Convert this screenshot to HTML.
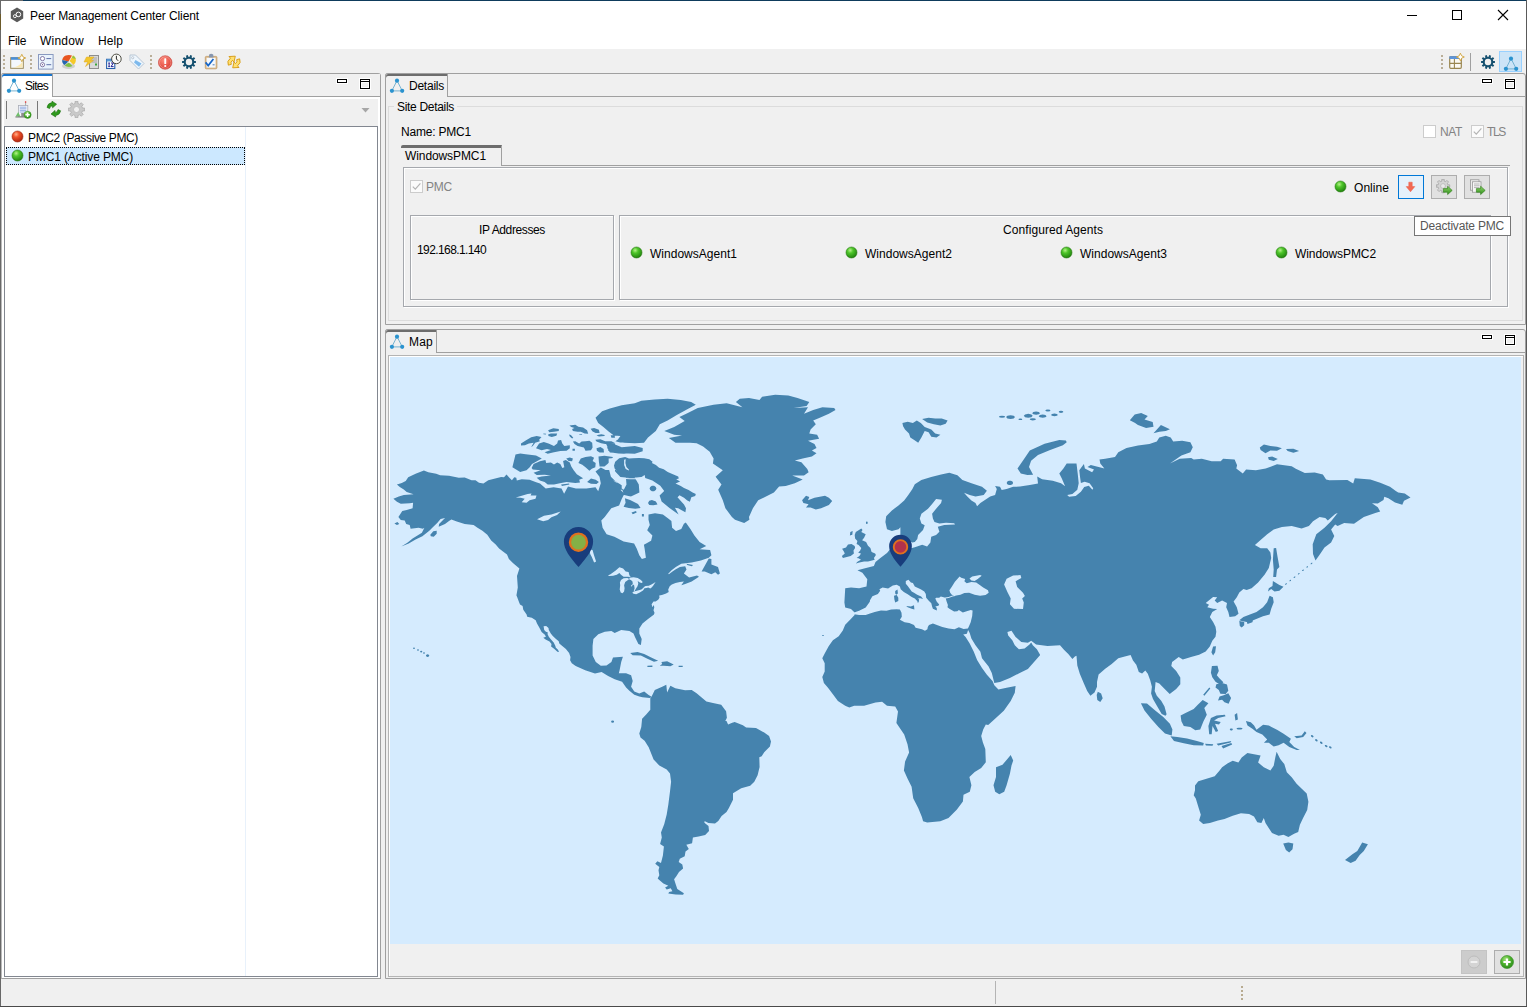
<!DOCTYPE html>
<html><head><meta charset="utf-8"><title>Peer Management Center Client</title>
<style>
html,body{margin:0;padding:0}
body{width:1527px;height:1007px;overflow:hidden;background:#f0f0f0;position:relative;font-family:"Liberation Sans",sans-serif;font-size:12px}
.b{position:absolute;box-sizing:border-box;display:block}
.t{position:absolute;white-space:nowrap;font-family:"Liberation Sans",sans-serif}
</style></head>
<body>
<svg width="0" height="0" style="position:absolute"><defs>
<radialGradient id="gG" cx="0.38" cy="0.3" r="0.75"><stop offset="0" stop-color="#b6f08a"/><stop offset="0.35" stop-color="#4ec62a"/><stop offset="1" stop-color="#1d7d0c"/></radialGradient>
<radialGradient id="gR" cx="0.38" cy="0.3" r="0.75"><stop offset="0" stop-color="#ffb08a"/><stop offset="0.35" stop-color="#f0532a"/><stop offset="1" stop-color="#a8200c"/></radialGradient>
<linearGradient id="gY" x1="0" y1="0" x2="0" y2="1"><stop offset="0" stop-color="#ffe27a"/><stop offset="1" stop-color="#e5a51c"/></linearGradient>
<linearGradient id="gGr" x1="0" y1="0" x2="0" y2="1"><stop offset="0" stop-color="#8fd46a"/><stop offset="1" stop-color="#2f8f1a"/></linearGradient>
<radialGradient id="gRed" cx="0.4" cy="0.35" r="0.7"><stop offset="0" stop-color="#ff8a7a"/><stop offset="1" stop-color="#d8362c"/></radialGradient>
<radialGradient id="gPlus" cx="0.4" cy="0.3" r="0.75"><stop offset="0" stop-color="#a5e37c"/><stop offset="0.5" stop-color="#4bb02c"/><stop offset="1" stop-color="#2a8a18"/></radialGradient>
</defs></svg>
<div class="b" style="left:0px;top:0px;width:1527px;height:49px;background:#fff"></div>
<div class="b" style="left:0px;top:0px;width:1527px;height:1px;background:#0e3b5c"></div>
<div class="b" style="left:0px;top:0px;width:23px;height:1px;background:#6b6b6b"></div>
<div class="b" style="left:0px;top:0px;width:1px;height:1007px;background:#686868"></div>
<div class="b" style="left:0px;top:14px;width:1px;height:16px;background:#6b5a2a"></div>
<div class="b" style="left:1526px;top:0px;width:1px;height:1007px;background:#5a5a5a"></div>
<div class="b" style="left:0px;top:1006px;width:1527px;height:1px;background:#4a4a4a"></div>
<svg class="b" style="left:10px;top:7px;" width="14" height="16" viewBox="0 0 14 16"><path d="M7 0.6 L13.2 4.2 L13.2 11.6 L7 15.2 L0.8 11.6 L0.8 4.2 Z" fill="#595959"/><circle cx="8.4" cy="7.4" r="2.3" fill="none" stroke="#fff" stroke-width="1"/><circle cx="4.9" cy="9.2" r="1.5" fill="none" stroke="#fff" stroke-width="0.9"/></svg>
<div class="t" style="left:30px;top:9px;font-size:12px;line-height:14px;color:#000;letter-spacing:-0.107px;">Peer Management Center Client</div>
<div class="b" style="left:1407px;top:15px;width:10px;height:1px;background:#000"></div>
<div class="b" style="left:1452px;top:10px;width:10px;height:10px;border:1px solid #000"></div>
<svg class="b" style="left:1497px;top:9px;" width="12" height="12" viewBox="0 0 12 12"><path d="M1 1 L11 11 M11 1 L1 11" stroke="#000" stroke-width="1.1" fill="none"/></svg>
<div class="t" style="left:8px;top:34px;font-size:12px;line-height:14px;color:#000;letter-spacing:-0.336px;">File</div>
<div class="t" style="left:40px;top:34px;font-size:12px;line-height:14px;color:#000;letter-spacing:0.219px;">Window</div>
<div class="t" style="left:98px;top:34px;font-size:12px;line-height:14px;color:#000;letter-spacing:0.078px;">Help</div>
<div class="b" style="left:3px;top:55px;width:2px;height:2px;background:#b9ae98"></div>
<div class="b" style="left:3px;top:59px;width:2px;height:2px;background:#b9ae98"></div>
<div class="b" style="left:3px;top:63px;width:2px;height:2px;background:#b9ae98"></div>
<div class="b" style="left:3px;top:67px;width:2px;height:2px;background:#b9ae98"></div>
<div class="b" style="left:30px;top:55px;width:2px;height:2px;background:#b9ae98"></div>
<div class="b" style="left:30px;top:59px;width:2px;height:2px;background:#b9ae98"></div>
<div class="b" style="left:30px;top:63px;width:2px;height:2px;background:#b9ae98"></div>
<div class="b" style="left:30px;top:67px;width:2px;height:2px;background:#b9ae98"></div>
<div class="b" style="left:150px;top:55px;width:2px;height:2px;background:#b9ae98"></div>
<div class="b" style="left:150px;top:59px;width:2px;height:2px;background:#b9ae98"></div>
<div class="b" style="left:150px;top:63px;width:2px;height:2px;background:#b9ae98"></div>
<div class="b" style="left:150px;top:67px;width:2px;height:2px;background:#b9ae98"></div>
<div class="b" style="left:1441px;top:55px;width:2px;height:2px;background:#b9ae98"></div>
<div class="b" style="left:1441px;top:59px;width:2px;height:2px;background:#b9ae98"></div>
<div class="b" style="left:1441px;top:63px;width:2px;height:2px;background:#b9ae98"></div>
<div class="b" style="left:1441px;top:67px;width:2px;height:2px;background:#b9ae98"></div>
<div class="b" style="left:1470px;top:53px;width:1px;height:18px;background:#a0a0a0"></div>
<div class="b" style="left:1499px;top:51px;width:23px;height:21px;background:#cce4f7;border:1px solid #99d1ff"></div>
<svg class="b" style="left:1503.3px;top:55.8px;" width="16" height="16" viewBox="0 0 16 16"><path d="M8 2.6 L2.8 12.9 L13.3 12.9 Z" fill="none" stroke="#6aaccc" stroke-width="0.9"/><circle cx="8" cy="2.7" r="2.1" fill="#2b93cf"/><circle cx="2.9" cy="12.8" r="2.1" fill="#2b93cf"/><circle cx="13.2" cy="12.8" r="2.1" fill="#2b93cf"/></svg>
<svg class="b" style="left:1481px;top:55.3px;" width="14" height="14" viewBox="0 0 14 14"><path d="M13.91 5.90 L13.91 8.10 L12.24 7.91 L11.78 9.34 L13.24 10.18 L11.95 11.95 L10.70 10.82 L9.49 11.70 L10.18 13.24 L8.10 13.91 L7.75 12.27 L6.25 12.27 L5.90 13.91 L3.82 13.24 L4.51 11.70 L3.30 10.82 L2.05 11.95 L0.76 10.18 L2.22 9.34 L1.76 7.91 L0.09 8.10 L0.09 5.90 L1.76 6.09 L2.22 4.66 L0.76 3.82 L2.05 2.05 L3.30 3.18 L4.51 2.30 L3.82 0.76 L5.90 0.09 L6.25 1.73 L7.75 1.73 L8.10 0.09 L10.18 0.76 L9.49 2.30 L10.70 3.18 L11.95 2.05 L13.24 3.82 L11.78 4.66 L12.24 6.09Z" fill="#15506f"/><circle cx="7.0" cy="7.0" r="3.22" fill="#f0f0f0"/></svg>
<svg class="b" style="left:182px;top:55.4px;" width="14" height="14" viewBox="0 0 14 14"><path d="M13.91 5.90 L13.91 8.10 L12.24 7.91 L11.78 9.34 L13.24 10.18 L11.95 11.95 L10.70 10.82 L9.49 11.70 L10.18 13.24 L8.10 13.91 L7.75 12.27 L6.25 12.27 L5.90 13.91 L3.82 13.24 L4.51 11.70 L3.30 10.82 L2.05 11.95 L0.76 10.18 L2.22 9.34 L1.76 7.91 L0.09 8.10 L0.09 5.90 L1.76 6.09 L2.22 4.66 L0.76 3.82 L2.05 2.05 L3.30 3.18 L4.51 2.30 L3.82 0.76 L5.90 0.09 L6.25 1.73 L7.75 1.73 L8.10 0.09 L10.18 0.76 L9.49 2.30 L10.70 3.18 L11.95 2.05 L13.24 3.82 L11.78 4.66 L12.24 6.09Z" fill="#15506f"/><circle cx="7.0" cy="7.0" r="3.22" fill="#f0f0f0"/></svg>
<svg class="b" style="left:10px;top:54px;" width="16" height="16" viewBox="0 0 16 16"><rect x="0.7" y="3.7" width="12.6" height="10.6" fill="#f4f8fd" stroke="#9c8a5a" stroke-width="1"/><rect x="1" y="3.2" width="12" height="2.6" fill="#4a8fd8"/><path d="M2 13.5 Q9 13 12.5 7.5 L12.5 13.5 Z" fill="#fbe9b4"/><path d="M11.8 0.3 L13 2.9 L15.7 4 L13 5.1 L11.8 7.7 L10.6 5.1 L7.9 4 L10.6 2.9 Z" fill="#fff" stroke="#d0a33a" stroke-width="0.9"/></svg>
<svg class="b" style="left:38px;top:54px;" width="16" height="16" viewBox="0 0 16 16"><rect x="0.5" y="0.5" width="14.6" height="14.6" fill="#eaf3fc" stroke="#8a9ac0" stroke-width="1"/><circle cx="4.5" cy="4.6" r="2.1" fill="#fff" stroke="#6a5a90" stroke-width="0.8"/><circle cx="4.5" cy="10.7" r="2.1" fill="#fff" stroke="#6a5a90" stroke-width="0.8"/><circle cx="4.5" cy="10.7" r="0.6" fill="#6a5a90"/><path d="M8.4 4.6 H13.2 M8.4 10.7 H13.2" stroke="#4f5fa0" stroke-width="0.9"/></svg>
<svg class="b" style="left:61px;top:54px;" width="16" height="16" viewBox="0 0 16 16"><ellipse cx="7.5" cy="12" rx="6.5" ry="3" fill="#b9b9b9" opacity="0.6"/><path d="M7.5 7.5 L1.2 6 A6.6 5.6 0 0 1 11 1.6 Z" fill="#e8551f"/><path d="M7.5 7.5 L1.2 6 A6.6 5.6 0 0 0 3.5 11 Z" fill="#2566b0"/><path d="M7.8 8.5 L3.6 11.6 A6.6 5.2 0 0 0 11.5 12 Z" fill="#7fc043"/><path d="M8.6 7 L12 1.4 A6 5.6 0 0 1 14.8 7 A6 5.6 0 0 1 12.6 10.8 Z" fill="#f6c928"/><path d="M12 1.4 A6 5.6 0 0 1 14.8 5 L11 4 Z" fill="#8fc64a"/></svg>
<svg class="b" style="left:83px;top:54px;" width="16" height="16" viewBox="0 0 16 16"><rect x="6.5" y="1.5" width="9" height="13" fill="#d9d9d9" stroke="#8e8e8e" stroke-width="1"/><path d="M8.5 4 H14 M8.5 6 H14 M8.5 8 H14" stroke="#9a9a9a" stroke-width="0.8"/><rect x="12" y="9.5" width="2" height="2" fill="#3aa53a"/><path d="M3.5 3 L11 3 L7.5 6.5 L10.5 6.5 L2.5 12.5 L4.8 8 L1 8 Z" fill="#f2c62e" stroke="#e0a820" stroke-width="0.5"/></svg>
<svg class="b" style="left:106px;top:53px;" width="17" height="17" viewBox="0 0 17 17"><rect x="0.6" y="6.3" width="8.2" height="9.2" fill="#fff" stroke="#2a62ac" stroke-width="1.1"/><rect x="0.6" y="6.3" width="8.2" height="2.2" fill="#5a9ad4"/><path d="M2.3 10 H3.9 M3.1 10 V13.6 M2.3 13.6 H3.9 M5 10 H7.4 L5 13.6 H7.6" stroke="#14148c" stroke-width="0.95" fill="none"/><circle cx="10.4" cy="5.9" r="4.8" fill="#f9f9f5" stroke="#3a3a30" stroke-width="0.9"/><path d="M10.4 2.8 V6 L12.2 7.8" stroke="#111" stroke-width="0.9" fill="none"/></svg>
<svg class="b" style="left:129px;top:54px;" width="16" height="16" viewBox="0 0 16 16"><path d="M1 1 L6.5 1 L15 9.5 L9.5 15 L1 6.5 Z" fill="#eef6fd" stroke="#b8c6d4" stroke-width="1"/><path d="M6.5 6 L12.5 9.5 L10 12.8 L5 8.5 Z" fill="#7db9ec"/><circle cx="3.7" cy="3.7" r="1.1" fill="#fff" stroke="#a5b4c4" stroke-width="0.7"/></svg>
<svg class="b" style="left:158px;top:54.6px;" width="15" height="15" viewBox="0 0 15 15"><circle cx="7.2" cy="7.5" r="6.8" fill="url(#gRed)" stroke="#c8463c" stroke-width="0.6"/><circle cx="7.2" cy="7.5" r="5.7" fill="none" stroke="#fff" stroke-opacity="0.55" stroke-width="0.5"/><rect x="6.3" y="3.2" width="1.9" height="5.8" rx="0.6" fill="#fff"/><circle cx="7.25" cy="11" r="1.1" fill="#fff"/></svg>
<svg class="b" style="left:204px;top:53px;" width="15" height="17" viewBox="0 0 15 17"><rect x="1.3" y="3.4" width="11.6" height="12.4" rx="1" fill="#dcb98a" stroke="#c09a66" stroke-width="0.8"/><rect x="2.6" y="4.8" width="9" height="9.8" fill="#f4f8fd"/><path d="M4.8 4.4 L5.2 1.4 Q7.2 0.2 9.2 1.4 L9.6 4.4 Z" fill="#8796ae"/><path d="M1.6 9.4 L4.2 12.6 L9.4 6" fill="none" stroke="#1565c8" stroke-width="1.7"/><path d="M8.6 11.8 H10.6" stroke="#1d5aa8" stroke-width="0.8"/></svg>
<svg class="b" style="left:226px;top:53.5px;" width="16" height="16" viewBox="0 0 16 16"><g transform="rotate(-38 8 8)"><path d="M1.6 7 Q2.6 2.6 7.6 2.8 L7.4 0.6 L12.6 4.2 L8 8 L7.8 5.8 Q5 5.6 4.4 8.2 Z" fill="#ffe070" stroke="#d4960c" stroke-width="0.8"/><path d="M14.4 9 Q13.4 13.4 8.4 13.2 L8.6 15.4 L3.4 11.8 L8 8 L8.2 10.2 Q11 10.4 11.6 7.8 Z" fill="#ffe070" stroke="#d4960c" stroke-width="0.8"/></g></svg>
<svg class="b" style="left:1448px;top:53px;" width="17" height="17" viewBox="0 0 17 17"><rect x="1.7" y="3.7" width="11.6" height="11.6" rx="1" fill="#fbf9f2" stroke="#9a8650" stroke-width="1.2"/><rect x="1.4" y="3.2" width="12.2" height="2.8" fill="#5b94dc"/><path d="M6.4 6 V15 M1.7 10.4 H13.3" stroke="#9a8650" stroke-width="1.1"/><path d="M12.4 0.2 L13.6 2.8 L16.3 4 L13.6 5.2 L12.4 7.8 L11.2 5.2 L8.5 4 L11.2 2.8 Z" fill="#fff" stroke="#d0a33a" stroke-width="0.9"/></svg>
<div class="b" style="left:1px;top:73px;width:380px;height:906px;border:1px solid #a0a0a0;border-left-color:#b9b9b9;border-radius:3px 3px 0 0;background:#fff"></div>
<div class="b" style="left:2px;top:74px;width:378px;height:23px;background:#f0f0f0;border-bottom:1px solid #a0a0a0"></div>
<div class="b" style="left:1px;top:73px;width:52px;height:24px;background:#fff;border-right:1px solid #a0a0a0;border-left:1px solid #b9b9b9;border-top:1px solid #a0a0a0;box-shadow:inset 0 2px 0 #1874cd;border-radius:3px 0 0 0"></div>
<svg class="b" style="left:5.5px;top:78px;" width="16" height="16" viewBox="0 0 16 16"><path d="M8 2.6 L2.8 12.9 L13.3 12.9 Z" fill="none" stroke="#6aaccc" stroke-width="0.9"/><circle cx="8" cy="2.7" r="2.1" fill="#2b93cf"/><circle cx="2.9" cy="12.8" r="2.1" fill="#2b93cf"/><circle cx="13.2" cy="12.8" r="2.1" fill="#2b93cf"/></svg>
<div class="t" style="left:25px;top:79px;font-size:12px;line-height:14px;color:#000;letter-spacing:-0.738px;">Sites</div>
<div class="b" style="left:336px;top:78px;width:12px;height:6px;background:#fff"></div>
<div class="b" style="left:337px;top:79px;width:10px;height:4px;border:1px solid #000;background:#fff"></div>
<div class="b" style="left:359px;top:78px;width:12px;height:12px;background:#fff"></div>
<div class="b" style="left:360px;top:79px;width:10px;height:10px;border:1px solid #000;background:#fff"></div>
<div class="b" style="left:361px;top:81px;width:8px;height:1px;background:#000"></div>
<div class="b" style="left:362px;top:83px;width:6px;height:4px;background:#f0f0f0"></div>
<div class="b" style="left:4px;top:99px;width:374px;height:27px;background:#f0f0f0"></div>
<div class="b" style="left:6px;top:101px;width:1px;height:18px;background:#787878"></div>
<div class="b" style="left:37px;top:101px;width:1px;height:18px;background:#787878"></div>
<svg class="b" style="left:361px;top:108px;" width="9" height="5" viewBox="0 0 9 5"><path d="M0.5 0 L8.5 0 L4.5 4.5 Z" fill="#a6a6a6"/></svg>
<svg class="b" style="left:15px;top:101px;" width="17" height="18" viewBox="0 0 17 18"><rect x="3.4" y="4.4" width="9.4" height="11.2" fill="#f4f6fb" stroke="#a9adb8" stroke-width="0.8"/><path d="M4.8 6.2 H11.4 M4.8 7.8 H11.4 M4.8 9.4 H11.4 M4.8 11 H11.4" stroke="#8aa6e0" stroke-width="0.9"/><rect x="6.2" y="12" width="3" height="3.6" fill="#8e8e8e"/><path d="M10.6 4.4 V1.2" stroke="#8a8a8a" stroke-width="0.7"/><circle cx="10.6" cy="1" r="0.8" fill="#e62020"/><path d="M0.6 15.6 L3.2 11 L5.4 15.6 Z" fill="#6fc06a"/><path d="M0.4 16 H13" stroke="#6a6a6a" stroke-width="0.9"/><circle cx="12.6" cy="13.8" r="3.6" fill="url(#gPlus)" stroke="#2f8a1c" stroke-width="0.4"/><path d="M12.6 11.6 V16 M10.4 13.8 H14.8" stroke="#fff" stroke-width="1.5"/></svg>
<svg class="b" style="left:45px;top:101px;" width="18" height="17" viewBox="0 0 18 17"><path d="M2 6.4 Q2.6 2.2 7 1.6 L7 0.2 L11.6 3.2 L7.6 6.8 L7.4 4.8 Q5 5 4.6 7.6 Z" fill="#2f9a1c" stroke="#1d6d10" stroke-width="0.6"/><path d="M15.6 9.8 Q15 14 10.6 14.6 L10.6 16 L6 13 L10 9.4 L10.2 11.4 Q12.6 11.2 13 8.6 Z" fill="#2f9a1c" stroke="#1d6d10" stroke-width="0.6"/></svg>
<svg class="b" style="left:68px;top:101px;" width="17" height="17" viewBox="0 0 17 17"><path d="M16.67 7.04 L16.67 9.96 L14.53 9.94 L13.78 11.75 L15.31 13.25 L13.25 15.31 L11.75 13.78 L9.94 14.53 L9.96 16.67 L7.04 16.67 L7.06 14.53 L5.25 13.78 L3.75 15.31 L1.69 13.25 L3.22 11.75 L2.47 9.94 L0.33 9.96 L0.33 7.04 L2.47 7.06 L3.22 5.25 L1.69 3.75 L3.75 1.69 L5.25 3.22 L7.06 2.47 L7.04 0.33 L9.96 0.33 L9.94 2.47 L11.75 3.22 L13.25 1.69 L15.31 3.75 L13.78 5.25 L14.53 7.06Z" fill="#c9c9c9" stroke="#a8a8a8" stroke-width="0.7"/><circle cx="8.5" cy="8.5" r="3" fill="#f0f0f0" stroke="#b4b4b4" stroke-width="0.7"/></svg>
<div class="b" style="left:4px;top:126px;width:374px;height:851px;border:1px solid #828790;background:#fff"></div>
<div class="b" style="left:245px;top:127px;width:1px;height:849px;background:#e8f1fb"></div>
<svg class="b" style="left:11.0px;top:130.0px;" width="13.0" height="13.0" viewBox="0 0 13.0 13.0"><circle cx="6.5" cy="6.5" r="5.5" fill="url(#gR)" stroke="#9c2a14" stroke-width="0.6"/></svg>
<div class="t" style="left:28px;top:131px;font-size:12px;line-height:14px;color:#000;letter-spacing:-0.372px;">PMC2 (Passive PMC)</div>
<div class="b" style="left:6px;top:147px;width:239px;height:18px;background:#cce8ff;border:1px dotted #000"></div>
<svg class="b" style="left:11.0px;top:149.0px;" width="13.0" height="13.0" viewBox="0 0 13.0 13.0"><circle cx="6.5" cy="6.5" r="5.5" fill="url(#gG)" stroke="#2a7a14" stroke-width="0.6"/></svg>
<div class="t" style="left:28px;top:150px;font-size:12px;line-height:14px;color:#000;letter-spacing:-0.138px;">PMC1 (Active PMC)</div>
<div class="b" style="left:385px;top:73px;width:1141px;height:252px;border:1px solid #a0a0a0;border-radius:3px 3px 0 0;background:#f0f0f0"></div>
<div class="b" style="left:386px;top:96px;width:1139px;height:1px;background:#a0a0a0"></div>
<div class="b" style="left:385px;top:73px;width:63px;height:24px;background:#f0f0f0;border-right:1px solid #a0a0a0;border-left:1px solid #a0a0a0;border-top:1px solid #a0a0a0;box-shadow:inset 0 2px 0 #6d6d6d;border-radius:3px 0 0 0"></div>
<svg class="b" style="left:389.4px;top:78.2px;" width="16" height="16" viewBox="0 0 16 16"><path d="M8 2.6 L2.8 12.9 L13.3 12.9 Z" fill="none" stroke="#6aaccc" stroke-width="0.9"/><circle cx="8" cy="2.7" r="2.1" fill="#2b93cf"/><circle cx="2.9" cy="12.8" r="2.1" fill="#2b93cf"/><circle cx="13.2" cy="12.8" r="2.1" fill="#2b93cf"/></svg>
<div class="t" style="left:409px;top:79px;font-size:12px;line-height:14px;color:#000;letter-spacing:-0.241px;">Details</div>
<div class="b" style="left:1481px;top:78px;width:12px;height:6px;background:#fff"></div>
<div class="b" style="left:1482px;top:79px;width:10px;height:4px;border:1px solid #000;background:#fff"></div>
<div class="b" style="left:1504px;top:78px;width:12px;height:12px;background:#fff"></div>
<div class="b" style="left:1505px;top:79px;width:10px;height:10px;border:1px solid #000;background:#fff"></div>
<div class="b" style="left:1506px;top:81px;width:8px;height:1px;background:#000"></div>
<div class="b" style="left:1507px;top:83px;width:6px;height:4px;background:#f0f0f0"></div>
<div class="b" style="left:388px;top:106px;width:1135px;height:215px;border:1px solid #dcdcdc"></div>
<div class="b" style="left:394px;top:100px;width:63px;height:14px;background:#f0f0f0"></div>
<div class="t" style="left:397px;top:100px;font-size:12px;line-height:14px;color:#000;letter-spacing:-0.309px;">Site Details</div>
<div class="t" style="left:401px;top:125px;font-size:12px;line-height:14px;color:#000;letter-spacing:-0.203px;">Name: PMC1</div>
<div class="b" style="left:1423px;top:125px;width:13px;height:13px;border:1px solid #cccccc;background:#fff"></div>
<div class="t" style="left:1440px;top:125px;font-size:12px;line-height:14px;color:#838383;letter-spacing:-0.370px;">NAT</div>
<div class="b" style="left:1471px;top:125px;width:13px;height:13px;border:1px solid #cccccc;background:#fbfbfb"></div>
<svg class="b" style="left:1471px;top:125px;" width="13" height="13" viewBox="0 0 13 13"><path d="M2.8 6.6 L5.3 9.2 L10.4 3.4" fill="none" stroke="#b4b4b4" stroke-width="1.2"/></svg>
<div class="t" style="left:1487px;top:125px;font-size:12px;line-height:14px;color:#838383;letter-spacing:-1.339px;">TLS</div>
<div class="b" style="left:401px;top:165px;width:1109px;height:1px;background:#a0a0a0"></div>
<div class="b" style="left:401px;top:145px;width:101px;height:21px;background:#f0f0f0;border-right:1px solid #a0a0a0;border-top:3px solid #6d6d6d;border-radius:2px 0 0 0"></div>
<div class="t" style="left:405px;top:149px;font-size:12px;line-height:14px;color:#000;letter-spacing:-0.094px;">WindowsPMC1</div>
<div class="b" style="left:403px;top:167px;width:1105px;height:140px;border:1px solid #a5a8ad;box-shadow:inset 1px 1px 0 #fff, 1px 1px 0 #fff"></div>
<div class="b" style="left:410px;top:180px;width:13px;height:13px;border:1px solid #cccccc;background:#fbfbfb"></div>
<svg class="b" style="left:410px;top:180px;" width="13" height="13" viewBox="0 0 13 13"><path d="M2.8 6.6 L5.3 9.2 L10.4 3.4" fill="none" stroke="#b4b4b4" stroke-width="1.2"/></svg>
<div class="t" style="left:426px;top:180px;font-size:12px;line-height:14px;color:#838383;letter-spacing:-0.224px;">PMC</div>
<svg class="b" style="left:1334.0px;top:180.0px;" width="13.0" height="13.0" viewBox="0 0 13.0 13.0"><circle cx="6.5" cy="6.5" r="5.5" fill="url(#gG)" stroke="#2a7a14" stroke-width="0.6"/></svg>
<div class="t" style="left:1354px;top:181px;font-size:12px;line-height:14px;color:#000;letter-spacing:0.052px;">Online</div>
<div class="b" style="left:1398px;top:175px;width:26px;height:24px;border:1px solid #0078d7;background:#e5f1fb"></div>
<div class="b" style="left:1431px;top:175px;width:26px;height:24px;border:1px solid #adadad;background:#e1e1e1"></div>
<div class="b" style="left:1464px;top:175px;width:26px;height:24px;border:1px solid #adadad;background:#e1e1e1"></div>
<svg class="b" style="left:1404px;top:180px;" width="14" height="14" viewBox="0 0 14 14"><path d="M4.8 2.2 H8.2 V6.6 H10.8 L6.5 11.8 L2.2 6.6 H4.8 Z" fill="#f26a55" stroke="#ea5a44" stroke-width="0.5"/></svg>
<svg class="b" style="left:1436px;top:179px;" width="17" height="17" viewBox="0 0 17 17"><path d="M13.69 5.80 L13.69 8.20 L11.86 8.16 L11.26 9.62 L12.58 10.89 L10.89 12.58 L9.62 11.26 L8.16 11.86 L8.20 13.69 L5.80 13.69 L5.84 11.86 L4.38 11.26 L3.11 12.58 L1.42 10.89 L2.74 9.62 L2.14 8.16 L0.31 8.20 L0.31 5.80 L2.14 5.84 L2.74 4.38 L1.42 3.11 L3.11 1.42 L4.38 2.74 L5.84 2.14 L5.80 0.31 L8.20 0.31 L8.16 2.14 L9.62 2.74 L10.89 1.42 L12.58 3.11 L11.26 4.38 L11.86 5.84Z" fill="#d5d5d5" stroke="#9c9c9c" stroke-width="0.7"/><circle cx="7" cy="7" r="2.4" fill="#e9e9e9" stroke="#a8a8a8" stroke-width="0.6"/><path d="M7.4 9.6 H11.6 V7.2 L16.2 11.4 L11.6 15.6 V13.2 H7.4 Z" fill="url(#gGr)" stroke="#2c7a18" stroke-width="0.6"/></svg>
<svg class="b" style="left:1469px;top:179px;" width="17" height="17" viewBox="0 0 17 17"><rect x="1.6" y="0.8" width="8.4" height="10.4" fill="#ececec" stroke="#8e8e8e" stroke-width="0.7"/><rect x="3.6" y="2.8" width="8.4" height="10.4" fill="#f7f7f7" stroke="#8e8e8e" stroke-width="0.7"/><path d="M5 5 H10.6 M5 6.8 H10.6 M5 8.6 H10.6" stroke="#9a9a9a" stroke-width="0.7"/><path d="M7.4 9.6 H11.6 V7.2 L16.2 11.4 L11.6 15.6 V13.2 H7.4 Z" fill="url(#gGr)" stroke="#2c7a18" stroke-width="0.6"/></svg>
<div class="b" style="left:410px;top:215px;width:204px;height:85px;border:1px solid #a5a8ad;box-shadow:inset 1px 1px 0 #fff, 1px 1px 0 #fff"></div>
<div class="t" style="left:479px;top:223px;font-size:12px;line-height:14px;color:#000;letter-spacing:-0.375px;">IP Addresses</div>
<div class="t" style="left:417px;top:243px;font-size:12px;line-height:14px;color:#000;letter-spacing:-0.596px;">192.168.1.140</div>
<div class="b" style="left:619px;top:215px;width:872px;height:85px;border:1px solid #a5a8ad;box-shadow:inset 1px 1px 0 #fff, 1px 1px 0 #fff"></div>
<div class="t" style="left:1003px;top:223px;font-size:12px;line-height:14px;color:#000;letter-spacing:0.074px;">Configured Agents</div>
<svg class="b" style="left:630.0px;top:246.0px;" width="13.0" height="13.0" viewBox="0 0 13.0 13.0"><circle cx="6.5" cy="6.5" r="5.5" fill="url(#gG)" stroke="#2a7a14" stroke-width="0.6"/></svg>
<div class="t" style="left:650px;top:247px;font-size:12px;line-height:14px;color:#000;letter-spacing:0.022px;">WindowsAgent1</div>
<svg class="b" style="left:845.0px;top:246.0px;" width="13.0" height="13.0" viewBox="0 0 13.0 13.0"><circle cx="6.5" cy="6.5" r="5.5" fill="url(#gG)" stroke="#2a7a14" stroke-width="0.6"/></svg>
<div class="t" style="left:865px;top:247px;font-size:12px;line-height:14px;color:#000;letter-spacing:0.022px;">WindowsAgent2</div>
<svg class="b" style="left:1060.0px;top:246.0px;" width="13.0" height="13.0" viewBox="0 0 13.0 13.0"><circle cx="6.5" cy="6.5" r="5.5" fill="url(#gG)" stroke="#2a7a14" stroke-width="0.6"/></svg>
<div class="t" style="left:1080px;top:247px;font-size:12px;line-height:14px;color:#000;letter-spacing:0.022px;">WindowsAgent3</div>
<svg class="b" style="left:1275.0px;top:246.0px;" width="13.0" height="13.0" viewBox="0 0 13.0 13.0"><circle cx="6.5" cy="6.5" r="5.5" fill="url(#gG)" stroke="#2a7a14" stroke-width="0.6"/></svg>
<div class="t" style="left:1295px;top:247px;font-size:12px;line-height:14px;color:#000;letter-spacing:-0.094px;">WindowsPMC2</div>
<div class="b" style="left:1414px;top:216px;width:97px;height:20px;border:1px solid #767676;background:#fff"></div>
<div class="t" style="left:1420px;top:219px;font-size:12px;line-height:14px;color:#575757;letter-spacing:-0.193px;">Deactivate PMC</div>
<div class="b" style="left:385px;top:329px;width:1141px;height:650px;border:1px solid #a0a0a0;border-radius:3px 3px 0 0;background:#f0f0f0"></div>
<div class="b" style="left:386px;top:352px;width:1139px;height:1px;background:#a0a0a0"></div>
<div class="b" style="left:385px;top:329px;width:52px;height:24px;background:#f0f0f0;border-right:1px solid #a0a0a0;border-left:1px solid #a0a0a0;border-top:1px solid #a0a0a0;box-shadow:inset 0 2px 0 #6d6d6d;border-radius:3px 0 0 0"></div>
<svg class="b" style="left:389.3px;top:334.2px;" width="16" height="16" viewBox="0 0 16 16"><path d="M8 2.6 L2.8 12.9 L13.3 12.9 Z" fill="none" stroke="#6aaccc" stroke-width="0.9"/><circle cx="8" cy="2.7" r="2.1" fill="#2b93cf"/><circle cx="2.9" cy="12.8" r="2.1" fill="#2b93cf"/><circle cx="13.2" cy="12.8" r="2.1" fill="#2b93cf"/></svg>
<div class="t" style="left:409px;top:335px;font-size:12px;line-height:14px;color:#000;letter-spacing:0.219px;">Map</div>
<div class="b" style="left:1481px;top:334px;width:12px;height:6px;background:#fff"></div>
<div class="b" style="left:1482px;top:335px;width:10px;height:4px;border:1px solid #000;background:#fff"></div>
<div class="b" style="left:1504px;top:334px;width:12px;height:12px;background:#fff"></div>
<div class="b" style="left:1505px;top:335px;width:10px;height:10px;border:1px solid #000;background:#fff"></div>
<div class="b" style="left:1506px;top:337px;width:8px;height:1px;background:#000"></div>
<div class="b" style="left:1507px;top:339px;width:6px;height:4px;background:#f0f0f0"></div>
<div class="b" style="left:388px;top:355px;width:1136px;height:622px;border:1px solid #b4b4b4;background:#f0f0f0;box-shadow:inset 1px 1px 0 #fff"></div>
<div class="b" style="left:1461px;top:950px;width:26px;height:24px;border:1px solid #c4c4c4;background:#cccccc"></div>
<div class="b" style="left:1494px;top:950px;width:26px;height:24px;border:1px solid #adadad;background:#e1e1e1"></div>
<svg class="b" style="left:1467px;top:955px;" width="14" height="14" viewBox="0 0 14 14"><circle cx="7" cy="7" r="6" fill="#d4d4d4" stroke="#bdbdbd" stroke-width="1"/><rect x="3.6" y="6" width="6.8" height="2" fill="#f2f2f2"/></svg>
<svg class="b" style="left:1500px;top:955px;" width="14" height="14" viewBox="0 0 14 14"><circle cx="7" cy="7" r="6.5" fill="url(#gPlus)" stroke="#2f8a1c" stroke-width="0.6"/><path d="M7 3.4 V10.6 M3.4 7 H10.6" stroke="#fff" stroke-width="2.2"/></svg>
<div class="b" style="left:995px;top:981px;width:1px;height:23px;background:#b4b4b4"></div>
<div class="b" style="left:1241px;top:986px;width:2px;height:2px;background:#b8ab90"></div>
<div class="b" style="left:1241px;top:990px;width:2px;height:2px;background:#b8ab90"></div>
<div class="b" style="left:1241px;top:994px;width:2px;height:2px;background:#b8ab90"></div>
<div class="b" style="left:1241px;top:998px;width:2px;height:2px;background:#b8ab90"></div>
<svg class="b" style="left:390px;top:357px" width="1131" height="587" viewBox="390 357 1131 587"><rect x="390" y="357" width="1131" height="587" fill="#d5ebfe"/><path fill="#4583ae" d="M396.9 484.6L401.8 483.1L405.7 481.1L408.2 477.2L415.6 473.8L423.9 470.6L428.3 472.3L436.2 473.8L440.1 475.2L449.0 475.7L458.8 477.7L464.7 477.5L471.6 480.2L475.5 480.2L479.0 482.8L483.4 483.4L488.3 480.2L501.1 476.9L504.0 477.2L506.5 474.5L509.4 477.7L511.9 480.2L514.3 477.2L516.3 477.7L516.8 480.6L521.7 479.2L529.6 479.7L535.5 482.1L540.0 483.6L545.7 488.5L553.6 487.2L561.5 488.5L564.1 493.8L568.0 486.6L575.9 488.5L586.4 488.5L595.5 487.2L598.2 491.2L600.8 483.3L599.5 476.7L595.5 471.5L600.8 467.6L606.0 470.2L609.9 476.7L615.2 482.0L621.7 484.6L624.4 489.8L620.4 489.8L624.4 493.8L621.7 499.0L619.1 505.6L611.3 508.2L604.7 517.0L601.3 520.5L602.6 527.7L606.6 534.2L614.4 536.8L623.6 541.4L634.1 543.4L636.7 548.6L639.3 555.2L641.9 559.1L645.9 557.8L644.6 548.6L643.9 544.7L651.1 540.8L652.4 535.5L647.2 530.3L649.8 525.0L648.5 519.8L648.5 514.6L655.0 513.3L662.9 514.6L668.2 518.5L671.4 521.1L672.1 527.7L676.0 530.9L681.3 529.0L683.9 523.7L685.8 522.4L690.4 529.0L694.4 535.5L699.6 542.1L706.2 546.0L699.6 549.3L710.1 549.9L711.4 555.2L708.8 557.8L700.9 560.4L691.7 562.4L681.3 563.8L675.8 567.1L671.6 570.3L668.2 573.8L668.9 574.2L672.1 571.7L675.8 569.2L679.9 566.9L685.2 566.3L686.5 569.6L683.9 573.5L689.1 577.5L697.0 575.5L699.0 576.8L691.7 581.4L685.2 584.0L681.3 585.3L683.9 581.4L679.9 582.1L675.5 583.1L671.8 584.6L669.7 586.2L668.2 589.4L668.7 592.0L666.1 593.6L661.9 595.1L659.2 595.6L659.5 597.7L658.2 599.8L655.6 601.4L653.5 601.4L651.6 604.3L652.4 607.2L653.7 605.1L654.3 607.2L653.5 610.3L654.5 612.8L654.0 614.6L647.4 619.5L642.5 623.6L639.3 628.5L639.3 633.4L641.7 639.1L640.9 644.9L638.4 644.1L635.2 637.5L633.5 633.4L629.4 631.0L621.2 630.1L614.7 632.9L611.4 631.0L604.8 631.8L598.3 634.2L593.4 639.1L592.6 645.7L592.6 655.5L595.8 662.1L600.8 665.7L606.5 665.4L611.4 662.1L613.0 657.5L622.9 656.8L621.2 662.1L619.6 670.3L618.8 673.2L626.1 673.2L631.1 675.2L632.7 680.9L631.1 686.7L634.3 691.6L639.3 693.5L644.2 691.6L648.3 694.8L651.5 696.8L649.9 698.1L642.5 697.3L639.3 696.5L634.3 694.8L629.4 690.8L626.1 687.5L622.1 681.7L614.7 679.3L608.1 676.0L601.6 671.9L595.0 673.6L585.2 670.3L575.7 666.0L571.8 663.2L570.1 660.3L570.5 657.0L569.1 653.1L565.9 649.1L562.6 646.2L559.3 643.6L558.7 641.3L555.7 638.7L552.8 636.0L550.8 633.4L548.8 630.1L548.5 627.9L546.2 626.1L543.6 626.2L544.2 630.1L545.9 631.8L547.9 632.4L547.5 634.1L548.8 636.7L550.8 639.3L553.7 642.6L555.4 645.9L555.7 647.5L558.0 649.8L559.0 652.1L557.4 651.8L554.1 648.8L551.1 646.5L551.5 643.9L549.5 641.6L545.6 639.6L543.3 637.7L545.9 636.7L544.9 634.7L541.6 632.1L541.0 630.8L539.0 626.9L537.0 623.6L535.7 620.3L531.8 617.7L527.2 616.7L526.6 614.4L523.3 609.8L522.6 605.9L520.0 604.6L518.8 601.5L516.4 594.9L516.1 597.3L517.8 587.4L517.0 576.0L519.4 568.6L512.9 562.9L508.9 559.0L507.0 554.4L503.0 551.4L499.1 548.5L495.7 544.5L491.2 540.6L487.3 534.7L482.4 530.8L477.5 527.8L473.6 524.9L464.7 523.9L456.8 521.4L451.4 519.5L449.0 520.9L445.0 523.9L438.7 526.8L439.1 523.9L445.0 518.0L440.6 519.0L437.2 522.9L432.3 527.8L429.3 530.8L422.4 536.2L415.6 539.6L408.7 543.6L403.8 545.5L401.3 546.5L407.7 542.6L412.6 538.6L421.9 532.7L424.4 527.8L422.9 528.8L418.5 527.8L410.6 528.8L409.7 524.9L406.2 523.9L404.7 520.5L400.8 520.0L398.4 517.0L402.3 511.1L406.7 510.1L412.6 508.2L413.1 502.8L409.7 503.3L400.8 503.7L396.9 501.8L393.4 498.8L398.8 496.4L403.8 494.9L413.6 494.2L406.7 491.9L403.8 489.5L399.8 487.0L396.9 484.6ZM615.7 470.0L626.2 477.2L638.0 483.8L637.4 492.9L629.5 496.2L624.2 494.9L622.3 489.7L618.3 483.1L609.8 477.9L605.2 470.0ZM627.0 476.7L633.5 475.4L638.8 484.6L639.4 492.5L630.9 496.4L624.4 494.4L623.7 489.8L626.3 484.6ZM624.9 498.2L630.1 500.1L638.0 504.1L640.6 508.0L635.4 508.7L628.8 508.0L623.6 506.7L625.6 502.8ZM631.5 512.6L636.0 510.9L636.7 512.6L632.8 514.3ZM641.9 513.9L643.9 513.9L643.9 516.5L641.9 516.5ZM648.0 503.1L649.3 500.8L651.9 499.9L655.9 501.4L657.5 504.4L653.3 505.2L649.3 504.9ZM656.4 488.5L655.8 490.1L654.1 491.2L651.9 491.2L650.2 490.1L649.6 488.5L650.2 486.9L651.9 485.8L654.1 485.8L655.8 486.9ZM613.3 467.7L615.2 461.8L619.2 458.2L625.1 456.9L629.0 458.5L632.9 458.2L638.8 457.9L644.1 458.2L649.3 459.2L652.6 461.8L651.9 463.1L655.9 465.1L659.1 467.7L663.7 469.3L667.7 472.0L672.9 474.2L678.2 476.5L678.8 478.5L676.2 479.2L680.1 481.5L675.5 483.4L680.8 486.0L684.0 488.0L688.6 490.0L692.6 492.6L695.8 493.9L695.2 495.9L691.3 497.2L689.9 501.8L687.3 500.5L684.0 497.8L679.5 495.2L677.5 497.2L680.8 501.1L684.0 504.4L686.0 508.3L685.4 512.3L682.1 510.6L678.2 508.3L674.9 507.7L676.8 510.9L678.6 514.6L669.5 508.0L661.6 501.5L659.6 495.6L664.2 491.0L660.3 485.7L652.4 480.5L645.2 477.9L644.7 474.9L641.5 476.9L636.2 477.5L629.7 477.5L623.1 476.9L619.2 474.9L615.9 472.6L617.2 471.0ZM595.5 417.8L602.1 411.2L609.9 408.6L621.7 405.3L634.8 403.3L641.4 400.7L654.5 399.4L667.6 398.8L680.7 400.1L691.2 402.0L695.8 404.7L687.3 409.2L676.8 415.1L667.6 420.4L659.8 424.3L655.8 430.9L648.0 437.4L644.0 442.7L634.8 443.3L624.4 442.7L616.5 441.4L620.4 436.1L613.9 435.5L608.6 431.5L603.4 426.9L598.2 423.0ZM607.3 442.7L613.9 444.0L621.7 447.3L634.8 445.9L642.7 447.9L642.7 451.2L634.8 453.8L621.7 453.2L609.9 452.5L607.3 447.9ZM512.4 467.2L515.5 454.6L520.2 453.4L525.7 454.2L536.0 455.4L541.8 458.5L536.0 461.7L532.0 464.0L529.7 467.2L526.5 470.3L520.2 471.9ZM531.6 468.0L533.6 464.0L539.9 461.3L545.4 460.1L546.2 462.9L550.9 462.5L554.0 464.4L557.2 462.5L560.3 464.0L562.3 468.0L564.3 467.2L563.1 460.9L565.8 460.1L569.8 462.5L571.3 466.4L573.7 470.3L576.8 474.3L583.1 478.2L579.2 479.8L580.0 482.5L575.3 482.9L566.6 482.1L561.1 482.9L554.0 484.5L547.7 484.5L544.6 482.1L539.9 480.6L536.7 477.8L541.5 476.6L550.9 475.4L544.6 474.7L536.7 475.0L533.6 472.7L540.7 470.3L532.8 469.5ZM566.2 458.5L569.8 457.4L572.9 458.5L572.1 461.3L568.6 460.9ZM536.0 448.3L539.1 443.6L543.8 442.0L548.5 443.6L554.0 446.0L557.2 443.6L558.0 440.4L561.1 440.1L562.3 443.6L564.3 446.0L569.8 445.2L569.8 448.3L566.6 450.7L560.3 451.1L554.0 452.2L547.7 453.8L544.6 452.2L550.9 449.9L547.0 449.1L541.5 450.3ZM521.0 443.6L525.7 440.4L531.2 437.3L536.7 436.1L541.5 436.9L539.1 439.7L539.9 441.2L535.2 442.8L532.8 446.0L531.2 447.1L533.6 442.8L528.9 443.6L524.9 445.2L521.0 445.6ZM548.1 430.2L553.3 428.3L558.8 429.0L558.8 431.0L554.0 431.8L549.3 432.2ZM548.1 434.5L550.9 433.4L557.2 433.4L556.4 435.7L551.7 436.9L548.5 436.1ZM543.4 433.4L546.2 433.8L545.8 434.5L543.4 434.3ZM569.4 425.5L575.3 424.7L578.4 426.7L583.1 427.5L587.1 430.2L588.2 433.8L584.7 433.4L580.8 431.8L577.6 431.8L572.9 431.0L572.1 429.0L574.5 427.9L571.3 427.1ZM590.6 428.7L594.1 427.9L598.9 429.8L599.6 433.0L595.7 433.0L592.6 431.4ZM579.2 434.2L582.3 434.2L581.6 434.9L579.2 434.8ZM596.5 435.3L601.2 434.2L604.8 434.9L604.4 436.1L598.9 436.5ZM569.0 434.5L570.9 434.9L573.3 437.7L572.1 438.5L569.8 436.5ZM572.9 441.6L575.3 441.2L579.2 443.6L581.6 441.6L585.5 441.2L589.4 440.8L592.2 442.8L592.6 447.5L591.0 450.3L585.5 450.7L583.9 447.5L580.8 446.7L577.6 446.0L574.5 444.0ZM572.5 448.7L574.9 448.7L574.9 450.7L572.5 450.7ZM596.5 448.3L600.4 447.1L603.6 449.1L604.0 452.6L599.6 452.6L596.9 450.7ZM595.3 439.7L600.4 439.3L605.2 441.2L611.4 441.2L615.4 443.2L610.7 443.6L605.2 444.0L601.2 443.2L596.5 441.6ZM605.5 442.8L608.3 441.6L614.6 443.6L616.2 446.7L621.7 447.5L630.1 446.7L630.1 453.0L624.0 453.8L618.5 453.4L611.4 452.6L608.3 450.7L607.5 446.7ZM615.4 441.2L618.5 438.9L621.7 435.7L624.0 434.5L630.1 437.3L630.1 442.8L624.0 442.0L620.1 442.4ZM610.7 435.3L614.6 435.3L615.0 437.7L611.4 437.7ZM578.4 462.9L580.8 458.5L585.5 457.0L591.0 456.2L594.1 457.7L592.6 460.9L595.7 462.9L595.3 467.2L591.8 468.8L589.4 470.7L585.5 467.2L582.3 464.8ZM598.5 456.6L604.4 455.8L613.0 457.0L610.7 460.9L607.5 464.0L604.4 466.4L599.6 466.4L598.9 461.7ZM587.1 482.1L591.0 478.6L595.7 479.8L598.9 482.1L596.5 484.1L591.0 483.7ZM561.1 484.6L569.0 483.4L569.4 484.5L561.9 486.1ZM726.7 403.3L742.4 407.3L735.9 402.0L739.8 398.8L749.0 398.1L759.5 400.1L762.1 396.8L775.2 394.8L788.3 395.5L797.5 398.1L809.3 402.0L806.6 406.0L793.5 407.9L808.0 407.3L804.0 413.8L813.2 409.9L822.4 407.3L834.2 407.9L835.5 409.9L828.9 413.8L819.8 417.8L813.2 420.4L815.8 424.3L810.6 429.6L809.3 433.5L817.1 434.8L819.1 438.7L808.0 440.7L814.5 444.0L816.5 447.9L811.9 450.5L816.5 453.2L811.9 456.4L802.7 458.4L794.8 460.4L801.4 462.3L807.3 468.9L808.6 472.2L804.0 475.4L792.2 475.4L802.7 479.4L794.8 483.3L785.7 485.9L779.1 486.6L773.9 492.5L766.0 496.4L758.2 500.3L752.9 508.2L749.0 517.0L749.4 519.8L744.2 523.1L735.0 519.8L731.9 517.0L725.4 508.2L722.8 500.3L718.2 489.8L721.5 484.6L715.6 476.7L722.8 470.2L712.9 463.6L713.6 458.4L709.7 451.8L703.1 446.6L696.6 443.3L690.0 442.7L675.5 442.7L668.9 438.1L682.0 435.5L674.2 434.8L664.3 430.9L674.2 426.9L684.7 421.0L679.4 417.1L687.3 413.2L697.8 407.9L713.5 404.7L726.6 403.3ZM802.1 500.3L806.0 495.7L809.3 497.1L808.0 500.3L814.5 497.7L821.1 496.4L825.0 495.7L828.9 497.7L832.2 501.0L828.9 504.9L821.1 508.2L815.8 509.5L810.6 507.5L806.0 507.5L808.6 504.3L803.4 503.0ZM701.6 571.6L708.8 558.5L711.4 559.1L711.4 564.4L718.0 567.0L719.9 573.5L718.0 574.8L715.3 572.2L711.4 574.2L704.8 571.6ZM686.5 563.7L693.1 565.0L691.7 566.3L687.2 565.0ZM630.2 653.1L637.6 651.9L644.2 653.9L650.7 657.2L658.1 660.8L654.0 661.8L647.4 658.8L640.9 655.5L632.7 655.2ZM661.4 662.1L667.1 661.3L673.7 664.5L670.4 666.2L663.8 665.7L659.7 665.7L662.2 664.0ZM647.4 665.7L652.4 665.4L652.4 667.0L647.4 667.0ZM678.6 665.7L682.7 665.7L682.7 667.0L678.6 667.0ZM430.3 534.7L433.3 531.3L436.7 530.8L436.7 533.7L433.7 536.7L430.8 536.2ZM394.4 523.4L397.4 521.9L399.3 523.9L396.9 524.9ZM651.5 696.8L654.8 689.9L662.2 686.7L666.3 684.7L667.1 692.4L670.4 685.8L675.3 688.3L685.1 690.3L691.7 689.9L696.6 693.2L706.4 701.4L713.0 703.0L721.2 704.7L726.1 711.2L726.9 717.8L725.3 721.1L726.5 721.1L728.1 724.4L732.2 722.8L734.7 721.9L742.9 725.2L746.1 727.4L756.0 728.0L764.2 732.6L769.1 735.9L771.0 741.6L769.9 746.5L764.2 752.3L761.7 756.3L759.3 757.2L759.6 767.0L757.6 775.2L754.3 781.7L750.2 785.8L741.2 788.3L733.0 793.2L733.0 799.8L728.9 808.0L726.5 812.1L721.6 816.1L718.3 821.1L715.0 823.5L708.5 823.0L704.4 821.1L704.9 817.0L704.4 822.7L708.5 826.0L709.0 830.9L705.2 835.0L698.6 836.6L692.9 837.4L692.1 843.2L686.3 844.8L688.8 848.9L685.5 851.4L684.7 856.3L679.8 858.8L678.7 862.1L682.3 864.5L683.1 868.6L679.0 871.9L676.5 876.0L674.1 879.3L675.7 884.2L677.3 889.1L683.9 893.2L683.1 894.8L675.7 894.5L668.3 893.5L669.1 891.9L672.4 891.2L670.8 888.3L666.7 889.6L665.1 887.5L668.3 885.8L663.4 883.4L659.3 880.1L657.7 878.5L659.3 875.2L658.5 870.3L659.3 867.0L655.2 863.7L657.4 861.3L661.0 862.9L662.9 855.5L663.9 846.5L660.1 844.0L661.8 837.4L661.0 832.5L664.2 824.3L666.7 814.5L668.3 804.7L670.0 791.6L671.1 781.7L670.0 773.6L666.7 769.5L659.3 765.4L653.6 759.6L648.7 747.3L644.6 740.8L640.5 737.5L639.3 733.4L641.3 726.9L642.1 718.7L646.2 714.6L650.3 709.7L650.3 698.2ZM845.2 588.3L851.0 587.4L859.1 588.3L866.5 586.6L867.3 579.3L862.4 572.7L857.5 570.2L864.1 568.6L873.9 566.1L875.5 562.1L880.4 558.0L887.0 553.0L890.3 548.9L893.6 544.8L896.8 541.6L899.3 538.3L900.4 535.8L900.4 527.2L898.5 529.3L891.9 530.9L887.0 529.3L885.4 521.9L886.2 516.2L891.9 510.4L898.5 505.5L904.2 500.6L908.3 494.9L912.4 489.1L914.8 484.2L921.4 480.1L931.2 476.9L941.1 474.4L949.3 472.8L957.4 475.2L962.4 480.1L972.2 483.4L982.0 486.7L986.9 490.8L983.7 494.9L975.5 496.5L969.7 494.9L964.0 492.8L967.3 496.5L971.4 500.6L975.5 503.1L977.1 506.3L980.4 503.1L985.3 499.8L990.2 496.5L995.1 494.9L996.8 489.1L995.1 485.9L1000.0 486.7L1001.7 490.0L1006.6 489.1L1013.1 486.7L1020.0 486.6L1029.8 484.9L1038.0 483.6L1037.2 476.4L1042.1 479.2L1052.8 480.8L1061.0 483.3L1065.1 486.2L1061.8 478.4L1059.3 473.5L1063.4 468.6L1066.7 463.6L1076.5 463.6L1077.7 473.5L1078.7 483.3L1077.3 489.8L1072.4 493.9L1067.2 495.1L1069.1 496.7L1075.7 495.9L1080.9 491.8L1084.2 486.9L1088.8 485.8L1092.4 489.8L1093.2 488.2L1089.6 483.3L1084.7 481.7L1080.9 483.0L1080.0 476.7L1079.3 470.2L1083.9 464.0L1084.9 468.6L1092.1 472.2L1094.0 469.4L1087.5 466.9L1090.8 464.9L1098.6 466.9L1104.4 468.6L1100.3 463.6L1099.5 459.5L1105.2 458.7L1115.0 457.1L1118.3 452.2L1126.5 448.1L1138.0 445.6L1149.4 444.0L1156.8 441.5L1159.3 437.4L1165.8 435.8L1170.7 437.4L1173.2 441.5L1182.2 440.7L1190.4 442.3L1192.8 447.3L1190.4 452.2L1181.4 455.4L1169.9 463.6L1179.7 458.7L1191.2 457.9L1193.7 459.5L1201.8 458.7L1211.7 461.2L1220.7 461.2L1223.1 458.7L1234.6 459.5L1237.1 465.3L1236.3 468.6L1242.8 473.5L1246.1 469.4L1255.9 470.2L1265.7 468.6L1277.0 464.2L1291.7 466.3L1295.8 468.8L1304.8 472.9L1314.7 472.4L1322.9 474.5L1326.1 479.5L1329.4 480.3L1347.4 479.9L1353.2 483.6L1354.8 478.3L1370.4 479.5L1380.2 482.7L1390.0 486.8L1395.8 490.9L1398.2 492.6L1404.8 493.4L1410.5 497.5L1404.0 500.8L1402.3 504.8L1395.0 502.4L1388.4 498.3L1384.3 496.7L1383.5 499.9L1377.8 503.5L1372.0 503.2L1377.8 507.3L1380.2 511.4L1375.3 513.0L1363.8 517.1L1354.0 523.7L1344.2 522.9L1337.6 526.1L1335.2 524.5L1331.1 529.4L1334.3 536.0L1331.1 542.5L1324.5 547.4L1319.6 554.8L1315.5 560.6L1313.0 554.0L1312.7 544.2L1316.3 534.3L1324.5 527.8L1331.1 521.2L1337.6 513.0L1335.2 513.9L1327.8 520.4L1325.3 518.0L1319.6 517.1L1313.0 521.2L1308.9 526.1L1301.6 528.6L1291.7 526.1L1281.9 527.0L1273.7 529.4L1267.2 534.3L1260.6 540.1L1254.9 545.0L1260.6 548.3L1267.2 548.3L1270.4 552.4L1271.2 558.0L1268.8 567.9L1264.7 574.4L1258.1 582.6L1251.6 588.3L1246.7 590.0L1243.4 589.1L1239.3 592.4L1236.8 597.3L1233.6 601.4L1236.8 607.2L1238.5 613.7L1235.2 616.2L1229.5 617.0L1228.3 612.1L1226.2 607.2L1227.0 603.1L1222.1 600.6L1217.2 603.1L1214.7 600.6L1217.2 597.3L1213.1 597.0L1205.7 603.1L1209.0 604.7L1207.3 607.2L1213.1 608.8L1217.2 609.1L1212.3 612.1L1209.8 617.0L1213.1 621.9L1215.5 626.8L1216.3 631.7L1215.5 636.7L1212.3 640.8L1209.8 646.5L1205.7 651.4L1199.1 654.7L1191.0 657.1L1182.8 659.6L1178.7 657.1L1172.1 662.1L1171.3 666.1L1176.2 671.1L1180.3 677.6L1180.3 684.2L1176.2 689.1L1169.7 694.0L1164.2 688.5L1159.3 683.6L1155.6 681.9L1154.7 690.9L1156.8 695.8L1161.2 700.8L1164.5 706.5L1166.6 714.2L1165.5 715.7L1161.7 713.9L1157.3 706.5L1153.0 699.1L1151.1 693.4L1151.9 686.8L1150.2 680.3L1147.8 673.7L1145.3 670.4L1142.1 673.4L1138.8 672.1L1136.3 664.7L1133.0 660.6L1130.6 654.9L1124.8 656.5L1118.3 658.2L1111.7 663.9L1105.2 668.8L1098.6 674.5L1097.0 681.9L1097.0 686.8L1094.5 692.6L1090.4 695.8L1087.2 690.9L1083.9 683.6L1079.8 673.7L1077.3 665.5L1076.5 655.7L1074.9 656.5L1072.4 659.0L1068.3 654.1L1064.2 650.0L1060.0 645.2L1047.5 646.0L1036.1 644.4L1031.2 640.8L1027.9 642.7L1021.3 641.9L1015.6 637.0L1011.5 630.8L1007.4 632.1L1008.2 635.4L1012.3 640.3L1014.8 645.2L1018.9 649.3L1024.6 648.5L1029.5 644.4L1031.2 642.4L1032.8 645.2L1036.9 649.3L1040.2 655.0L1033.6 662.4L1027.9 668.9L1019.7 673.0L1009.9 678.0L1000.0 682.1L994.3 682.9L991.8 673.0L988.6 666.5L982.0 658.3L980.4 651.7L975.5 645.2L971.4 638.6L969.7 632.9L968.1 630.1L966.9 633.7L963.2 634.5L965.6 637.0L969.7 643.6L973.8 651.7L977.1 659.9L982.0 668.1L986.9 674.7L992.7 681.2L994.3 685.3L998.4 689.4L1006.6 687.8L1015.6 686.1L1014.8 692.7L1010.7 700.9L1003.8 710.7L994.8 718.9L988.2 725.0L985.8 724.6L983.2 729.5L981.2 736.0L982.9 742.6L985.3 749.1L985.8 762.3L981.2 768.0L974.7 772.1L969.4 777.0L971.4 785.2L969.8 791.7L963.5 794.7L962.9 801.6L956.7 809.8L948.5 818.0L940.3 821.2L927.2 822.5L923.1 821.2L921.9 817.1L918.2 808.1L913.2 798.3L911.6 786.8L907.5 778.6L903.9 770.4L905.1 761.4L909.1 752.4L907.5 744.2L904.2 734.4L896.4 722.9L898.0 711.5L895.2 706.6L887.0 705.8L882.1 701.7L875.5 702.5L864.1 705.8L854.2 705.8L849.3 707.4L845.2 705.8L837.9 700.9L832.9 694.3L828.0 687.8L823.9 682.9L822.3 677.1L824.7 671.4L824.7 663.2L822.3 658.3L824.7 653.4L828.8 646.0L832.9 640.3L838.7 636.2L842.8 630.4L845.2 624.7L850.1 619.8L854.6 614.9L854.6 612.4L851.0 609.1L845.2 607.5L844.4 602.6L845.2 588.7ZM854.7 535.1L855.8 531.9L858.6 530.3L861.3 528.4L862.5 529.9L861.3 531.9L865.7 534.3L864.1 537.8L862.1 540.2L866.1 542.1L868.0 545.7L870.4 548.0L871.6 552.0L875.1 553.5L875.9 555.1L873.9 557.9L874.7 559.8L872.0 560.6L868.0 561.4L864.1 561.4L859.4 562.6L855.8 563.6L857.8 561.4L861.0 559.8L858.6 558.3L856.6 557.9L859.4 555.9L861.0 553.5L858.2 552.7L860.2 550.4L861.3 548.0L858.6 544.9L856.6 544.1L857.4 541.0L855.1 538.6ZM842.1 548.8L846.0 547.6L848.0 544.5L851.5 543.9L854.7 546.1L855.1 548.0L853.5 550.4L853.9 553.5L850.7 555.9L846.8 557.1L842.9 557.9L841.9 555.9L844.8 553.5L843.7 551.2ZM850.3 531.9L852.7 531.1L852.3 534.7L849.9 535.4ZM867.7 522.9L867.6 523.6L867.1 524.1L866.5 524.1L866.1 523.6L865.9 522.9L866.1 522.1L866.5 521.6L867.1 521.6L867.6 522.1ZM902.4 423.0L907.7 421.7L912.9 423.0L916.8 420.4L920.8 423.0L924.7 426.9L931.3 429.6L935.2 433.5L940.4 434.8L936.5 437.4L931.3 436.8L928.6 432.2L924.7 430.9L921.4 437.4L918.2 442.7L914.2 440.0L910.3 437.4L909.0 433.5L905.0 429.6L903.1 426.3ZM922.1 419.1L928.6 417.8L935.2 418.4L941.7 418.4L947.6 420.4L945.7 423.7L940.4 425.6L933.9 424.3L927.3 422.4ZM1065.9 440.4L1059.3 439.9L1044.6 443.7L1029.8 450.5L1022.5 461.2L1017.5 468.6L1020.8 473.5L1027.4 475.1L1033.1 474.8L1029.0 466.9L1031.1 460.7L1038.0 455.1L1049.5 450.2L1062.9 445.3L1066.7 442.3ZM1013.1 482.9L1012.5 484.2L1010.9 485.0L1008.9 485.0L1007.3 484.2L1006.7 482.9L1007.3 481.6L1008.9 480.8L1010.9 480.8L1012.5 481.6ZM1005.2 416.7L1004.3 417.5L1002.0 417.8L999.8 417.5L998.9 416.7L999.8 416.0L1002.0 415.7L1004.3 416.0ZM1015.0 417.1L1013.7 418.4L1010.6 418.9L1007.4 418.4L1006.1 417.1L1007.4 415.8L1010.6 415.3L1013.7 415.8ZM1022.3 419.3L1021.8 419.9L1020.4 420.1L1019.0 419.9L1018.4 419.3L1019.0 418.8L1020.4 418.6L1021.8 418.8ZM1032.7 415.8L1031.4 417.2L1028.2 417.8L1025.1 417.2L1023.8 415.8L1025.1 414.4L1028.2 413.8L1031.4 414.4ZM1040.0 413.2L1038.9 414.3L1036.1 414.8L1033.3 414.3L1032.2 413.2L1033.3 412.1L1036.1 411.6L1038.9 412.1ZM1036.0 419.3L1035.1 420.1L1032.8 420.4L1030.6 420.1L1029.7 419.3L1030.6 418.6L1032.8 418.3L1035.1 418.6ZM1046.6 416.2L1045.4 417.3L1042.7 417.8L1039.9 417.3L1038.7 416.2L1039.9 415.1L1042.7 414.6L1045.4 415.1ZM1050.5 410.6L1049.8 411.3L1047.9 411.6L1046.0 411.3L1045.3 410.6L1046.0 409.8L1047.9 409.5L1049.8 409.8ZM1057.9 414.9L1056.9 415.8L1054.5 416.2L1052.0 415.8L1051.0 414.9L1052.0 414.0L1054.5 413.6L1056.9 414.0ZM1063.4 411.9L1062.7 412.6L1061.0 412.9L1059.3 412.6L1058.7 411.9L1059.3 411.1L1061.0 410.8L1062.7 411.1ZM1129.8 420.2L1134.7 414.5L1141.2 412.9L1147.8 416.1L1144.5 419.4L1152.7 421.9L1153.5 426.8L1146.1 427.9L1138.0 425.1L1134.7 422.7ZM1153.5 433.3L1160.9 425.1L1169.9 429.2L1165.8 430.9L1159.3 431.7ZM1259.8 447.5L1263.9 444.6L1270.4 445.9L1277.0 446.7L1281.9 448.3L1277.0 450.8L1270.4 450.5L1265.5 453.2L1260.6 450.0ZM1286.0 449.1L1293.4 448.8L1299.1 451.1L1293.4 452.8L1287.6 451.1ZM1268.0 457.3L1272.1 456.5L1277.8 459.0L1273.7 460.9L1268.8 459.8ZM1273.7 548.2L1276.1 547.9L1277.5 556.4L1279.4 567.0L1277.0 569.5L1276.1 576.9L1273.2 576.9L1273.7 569.5L1272.9 559.7ZM1272.9 581.0L1279.4 585.1L1283.5 586.7L1279.4 590.8L1274.5 591.6L1271.2 589.1L1268.0 591.6L1268.8 588.3L1272.5 585.9ZM1269.6 595.7L1272.9 597.3L1273.7 602.3L1271.2 608.8L1269.6 614.5L1263.0 616.2L1258.1 618.3L1253.2 620.3L1246.7 621.9L1241.7 621.1L1239.3 620.3L1243.4 617.0L1249.9 614.5L1256.5 612.1L1263.0 607.2L1267.1 602.3ZM1246.7 621.4L1253.2 619.8L1252.4 622.2L1247.5 623.9ZM1239.3 621.1L1244.2 621.9L1244.2 625.2L1241.7 627.6L1239.8 626.0ZM1213.1 646.5L1216.0 646.2L1215.2 652.2L1213.1 655.5L1211.4 652.2ZM1211.9 666.1L1217.5 665.8L1218.8 671.1L1216.8 675.2L1219.6 678.4L1223.4 682.2L1220.4 685.0L1215.5 681.7L1212.3 677.3L1210.9 672.7ZM1216.3 684.2L1222.1 682.9L1227.0 684.5L1228.3 690.7L1225.7 694.0L1220.4 693.7L1218.8 689.9L1215.5 687.4ZM1219.6 696.5L1223.7 695.3L1228.3 693.2L1231.1 698.1L1228.6 703.8L1224.5 702.2L1222.1 699.7L1218.0 700.6ZM1203.2 694.8L1209.3 687.4L1210.3 688.4L1204.4 695.8ZM1097.8 691.7L1101.1 693.4L1102.7 698.3L1100.3 701.9L1097.3 699.9L1096.7 695.0ZM1010.7 754.9L1013.2 760.6L1011.5 765.5L1009.9 773.7L1006.6 785.2L1004.2 791.7L999.3 794.2L995.2 791.7L993.5 785.2L996.0 777.0L996.0 767.2L1002.5 764.7L1007.4 759.0ZM1140.9 703.2L1147.0 703.5L1155.2 710.6L1163.3 717.1L1169.9 723.7L1172.4 729.4L1171.7 735.6L1165.0 733.5L1158.4 727.0L1151.1 718.8L1144.5 710.6ZM1170.4 736.3L1177.3 737.0L1187.1 738.6L1196.9 740.9L1203.8 742.9L1203.2 745.5L1193.7 745.2L1183.8 743.2L1174.0 740.9ZM1205.1 743.8L1213.3 744.2L1212.5 745.8L1205.9 745.5ZM1216.6 743.8L1231.3 740.9L1230.5 742.5L1218.2 745.5ZM1221.5 746.1L1231.3 742.9L1232.2 744.5L1223.1 748.4ZM1180.6 715.5L1185.5 713.0L1193.7 708.9L1197.8 704.8L1202.7 699.9L1208.4 703.2L1204.3 708.1L1206.8 714.7L1203.5 721.2L1200.2 729.4L1195.3 730.2L1190.4 727.0L1183.8 726.1L1181.4 721.2ZM1210.9 718.0L1216.6 715.5L1224.8 714.7L1225.6 716.3L1218.2 718.0L1214.1 720.4L1220.7 722.1L1219.0 724.5L1215.0 723.7L1218.2 731.1L1215.8 731.9L1212.5 726.1L1211.7 734.3L1209.2 734.3L1208.4 726.1ZM1234.6 714.7L1237.1 713.0L1237.9 719.6L1235.4 720.4ZM1232.8 729.4L1232.6 730.0L1231.8 730.4L1230.9 730.4L1230.1 730.0L1229.8 729.4L1230.1 728.8L1230.9 728.5L1231.8 728.5L1232.6 728.8ZM1242.5 728.6L1242.0 729.2L1240.5 729.6L1238.6 729.6L1237.1 729.2L1236.5 728.6L1237.1 728.0L1238.6 727.7L1240.5 727.7L1242.0 728.0ZM1245.9 721.1L1250.8 722.3L1254.1 725.6L1256.5 729.7L1263.1 724.7L1268.8 725.6L1277.0 729.7L1283.6 733.8L1290.9 738.7L1289.3 741.9L1294.2 746.9L1299.9 750.1L1296.7 750.1L1289.3 746.9L1283.6 742.8L1278.6 745.2L1273.7 746.4L1268.8 742.8L1263.9 742.8L1267.2 739.5L1262.3 734.6L1256.5 732.1L1252.4 728.8L1247.5 725.6ZM1294.2 736.2L1301.6 735.4L1304.8 731.3L1306.5 732.9L1303.2 737.0L1296.7 738.2ZM1313.5 737.1L1312.4 737.4L1311.1 736.5L1310.9 735.3L1312.1 735.0L1313.4 736.0ZM1317.6 741.2L1316.5 741.5L1315.2 740.6L1315.0 739.4L1316.2 739.1L1317.5 740.1ZM1322.5 743.7L1321.4 743.9L1320.1 743.0L1319.9 741.8L1321.1 741.6L1322.4 742.5ZM1327.5 747.0L1326.3 747.2L1325.0 746.3L1324.8 745.1L1326.0 744.9L1327.3 745.8ZM1331.6 748.3L1330.4 748.5L1329.1 747.6L1328.9 746.4L1330.1 746.2L1331.4 747.1ZM1195.0 785.4L1198.3 781.3L1206.5 778.8L1214.7 776.3L1219.6 770.6L1222.1 767.3L1227.8 763.2L1232.7 760.8L1238.4 762.4L1241.7 757.5L1247.4 752.9L1254.0 754.2L1260.6 755.5L1258.1 762.4L1263.8 767.3L1270.4 770.6L1273.7 765.7L1275.3 757.5L1276.6 751.8L1280.2 759.1L1284.3 764.1L1286.8 772.3L1291.7 777.2L1296.6 783.7L1301.5 788.6L1306.7 793.6L1308.4 801.7L1307.2 809.9L1303.1 818.1L1299.9 824.7L1298.2 832.1L1294.1 833.7L1288.4 837.0L1283.5 834.8L1278.6 835.8L1272.0 832.9L1268.7 828.0L1265.5 823.0L1263.8 818.1L1261.4 823.0L1257.3 822.2L1254.0 816.5L1249.1 814.0L1240.9 813.2L1232.7 815.7L1224.5 818.9L1218.0 820.6L1209.8 823.0L1203.2 823.9L1199.1 820.6L1200.8 814.8L1198.3 806.7L1195.8 798.5L1193.7 795.2L1195.0 790.3ZM1283.2 843.5L1288.4 842.4L1293.3 843.5L1292.5 849.3L1289.2 852.5L1285.9 850.1ZM1345.0 859.9L1352.4 854.2L1357.3 850.9L1362.2 842.4L1367.9 844.3L1363.8 850.9L1359.7 855.0L1355.6 860.7L1350.7 862.9ZM415.0 648.2L414.7 648.7L414.0 648.9L413.3 648.7L413.0 648.2L413.3 647.7L414.0 647.5L414.7 647.7ZM419.0 650.0L418.7 650.5L418.0 650.7L417.3 650.5L417.0 650.0L417.3 649.5L418.0 649.3L418.7 649.5ZM422.3 651.6L422.0 652.2L421.2 652.4L420.4 652.2L420.1 651.6L420.4 651.0L421.2 650.8L422.0 651.0ZM425.0 653.0L424.7 653.5L424.0 653.7L423.3 653.5L423.0 653.0L423.3 652.5L424.0 652.3L424.7 652.5ZM429.3 655.6L428.8 656.5L427.6 656.9L426.4 656.5L425.9 655.6L426.4 654.7L427.6 654.3L428.8 654.7ZM614.1 721.6L613.7 722.4L612.6 722.7L611.5 722.4L611.1 721.6L611.5 720.8L612.6 720.5L613.7 720.8ZM823.9 635.5L823.5 636.1L822.5 636.1L822.1 635.5L822.5 634.9L823.5 634.9ZM1312.4 562.8L1312.3 563.6L1311.4 564.2L1310.6 564.2L1310.7 563.4L1311.6 562.8ZM1308.1 566.2L1308.0 567.0L1307.1 567.7L1306.4 567.6L1306.5 566.8L1307.4 566.2ZM1303.9 569.7L1303.8 570.4L1302.9 571.1L1302.1 571.0L1302.2 570.3L1303.1 569.6ZM1299.6 573.1L1299.5 573.8L1298.6 574.5L1297.9 574.4L1298.0 573.7L1298.9 573.0ZM1295.4 576.5L1295.3 577.2L1294.4 577.9L1293.6 577.8L1293.7 577.1L1294.6 576.4ZM1291.1 579.9L1291.0 580.7L1290.1 581.3L1289.4 581.3L1289.5 580.5L1290.4 579.8ZM1286.9 583.3L1286.8 584.1L1285.9 584.7L1285.1 584.7L1285.2 583.9L1286.1 583.3Z"/><path fill="#d5ebfe" d="M608.6 458.4L613.9 458.1L613.9 464.9L615.2 471.5L620.4 477.0L625.9 477.5L626.5 484.6L623.8 489.8L621.7 488.5L621.7 485.3L615.5 481.3L610.9 476.7L608.9 468.9ZM515.8 497.4L527.6 493.9L531.5 493.4L530.6 495.4L536.5 495.4L535.5 498.8L529.6 500.3L526.6 502.8L521.7 502.3L524.7 498.8L520.7 497.8ZM537.1 519.3L544.0 515.7L551.4 514.5L560.7 511.4L557.1 515.0L551.4 517.3L548.1 519.9L543.2 521.3ZM589.5 549.4L592.5 550.1L594.1 555.5L596.1 561.6L594.1 562.5L591.8 557.1L590.2 553.9ZM607.9 575.5L610.5 574.2L615.7 570.5L619.4 567.3L623.1 568.4L625.7 571.5L628.6 572.1L629.4 575.2L630.7 577.0L627.3 576.8L623.6 576.8L621.0 574.7L619.4 573.1L616.8 574.7L613.1 575.7L609.4 576.0ZM621.0 579.9L623.6 578.3L627.3 578.1L629.4 578.9L627.3 580.4L625.2 582.0L624.1 585.2L624.6 588.3L624.1 591.5L622.5 593.3L620.7 592.5L619.7 589.4L620.2 585.2L619.9 582.5ZM629.4 577.8L633.6 577.3L637.7 578.1L640.9 579.9L642.7 582.0L641.9 583.1L639.8 582.5L637.7 581.0L638.3 583.6L637.5 586.2L636.2 588.3L634.6 590.9L633.6 591.5L634.6 588.3L634.1 585.2L633.0 584.6L631.5 586.7L630.9 585.7L632.8 584.1L632.5 581.5L630.9 579.9L629.4 579.4ZM632.2 592.8L634.1 591.5L637.7 590.4L641.4 589.4L643.5 587.8L645.1 586.2L644.6 588.3L643.0 590.4L639.8 592.5L636.2 594.3L633.6 593.8ZM643.5 587.3L645.6 586.0L648.8 585.7L651.4 584.6L654.0 583.1L655.6 582.0L653.5 585.2L651.9 587.3L650.3 588.6L648.2 587.5L645.6 588.3ZM624.1 459.8L625.7 459.2L625.4 463.1L626.4 467.0L629.0 469.7L628.7 470.6L625.7 469.0L624.1 465.1ZM622.5 477.8L629.7 478.2L636.2 478.2L641.5 477.5L641.6 478.6L636.2 479.2L629.7 479.2L622.5 478.8ZM908.3 544.8L908.3 548.9L914.8 547.3L922.2 544.8L927.1 546.5L930.4 542.4L931.2 536.7L936.1 535.0L939.4 531.7L937.8 526.8L944.3 524.9L955.0 524.4L954.2 523.2L946.0 522.7L939.4 523.6L934.5 521.9L932.9 518.6L932.1 513.7L936.1 508.8L941.1 503.1L941.9 499.8L936.1 499.0L932.1 503.9L928.0 508.8L921.4 513.7L919.8 518.6L921.4 523.6L924.7 525.2L923.0 530.1L918.1 535.0L917.3 539.1L914.8 541.9L912.4 542.4L910.3 541.6ZM851.0 613.4L854.2 612.4L859.1 610.8L865.7 607.5L869.8 601.8L870.0 600.2L872.4 596.2L877.9 593.9L880.2 590.7L879.4 589.2L882.6 587.6L888.1 588.4L892.8 585.6L896.7 584.8L899.9 586.4L900.7 589.2L903.8 591.9L907.7 594.3L911.7 597.0L914.8 598.6L917.2 601.0L918.0 603.3L916.4 605.3L918.8 601.7L919.1 599.4L918.0 598.6L920.3 598.2L923.1 599.0L921.1 596.6L917.2 594.7L914.0 592.7L911.7 591.5L910.1 589.2L907.7 586.0L905.8 583.7L905.8 580.9L908.5 579.7L910.9 582.5L912.9 582.9L914.8 586.4L918.0 588.0L921.1 589.5L924.3 591.5L925.8 593.9L926.2 597.8L929.0 601.0L931.3 603.3L932.1 606.5L932.9 608.8L936.8 610.4L936.8 608.0L935.3 606.5L938.4 605.7L939.2 604.5L936.8 601.7L935.3 598.6L936.1 597.8L939.2 597.8L940.8 596.6L945.5 597.8L946.7 601.7L947.9 604.9L947.5 607.2L949.4 608.8L954.1 611.6L957.3 611.2L958.9 610.0L962.8 612.4L966.7 611.2L970.7 610.0L972.6 610.4L972.2 615.9L970.7 622.2L969.1 626.1L967.9 628.5L963.6 628.9L958.9 627.3L954.5 629.3L948.6 628.5L942.3 626.9L937.6 625.3L932.9 623.4L929.0 624.9L927.8 626.9L927.4 629.3L925.0 630.8L921.9 629.3L915.6 627.7L914.0 624.9L909.3 623.0L904.6 622.2L899.9 619.8L901.8 616.7L901.5 612.7L899.9 609.6L896.7 609.2L891.2 609.6L886.5 610.8L881.0 610.4L874.7 612.0L870.0 613.5L865.7 614.9L859.1 614.9L854.2 614.2ZM949.4 590.3L951.8 586.8L954.9 581.7L959.6 576.6L961.2 577.8L965.2 578.9L964.4 581.3L966.7 583.3L971.4 582.1L976.2 582.5L980.1 585.2L983.2 587.6L988.0 590.3L988.7 592.7L985.6 595.1L980.1 595.8L974.6 594.7L969.1 592.7L964.4 593.1L960.4 594.7L954.9 595.8L951.8 594.7L950.2 592.7ZM969.5 578.5L972.2 576.6L980.1 575.0L981.7 575.8L977.7 578.9L974.6 580.9L971.4 580.5ZM945.1 597.5L948.6 597.0L952.6 595.6L955.3 595.3L955.3 596.1L952.6 596.5L948.6 598.0L945.5 598.4ZM1004.1 584.6L1006.6 578.8L1013.1 575.6L1020.5 575.1L1021.3 578.0L1015.6 581.3L1017.2 587.0L1023.0 592.8L1024.9 596.0L1022.2 598.5L1023.8 602.6L1023.0 609.1L1014.0 608.8L1009.9 604.2L1010.7 598.5L1007.4 591.9Z"/><path fill="#4583ae" d="M895.2 591.1L897.5 589.5L897.9 593.5L896.3 594.7L895.2 593.5ZM894.0 595.8L896.7 595.1L898.3 597.8L898.3 601.0L895.2 602.5L894.4 599.4ZM906.2 606.1L910.9 606.5L914.0 605.3L914.4 609.6L911.7 608.8L907.7 607.2Z"/><path d="M578.50 566.90 C570.03 557.50 563.90 549.53 563.90 541.50 A14.6 14.6 0 1 1 593.10 541.50 C593.10 549.53 586.97 557.50 578.50 566.90Z" fill="#183d7c"/><circle cx="578.5" cy="542.2" r="8.55" fill="#84b046" stroke="#e0711f" stroke-width="2.30"/><path d="M900.50 566.80 C893.92 559.16 889.15 552.39 889.15 546.15 A11.35 11.35 0 1 1 911.85 546.15 C911.85 552.39 907.08 559.16 900.50 566.80Z" fill="#183d7c"/><circle cx="900.5" cy="546.9" r="6.75" fill="#b3314b" stroke="#e0711f" stroke-width="1.90"/></svg>
</body></html>
